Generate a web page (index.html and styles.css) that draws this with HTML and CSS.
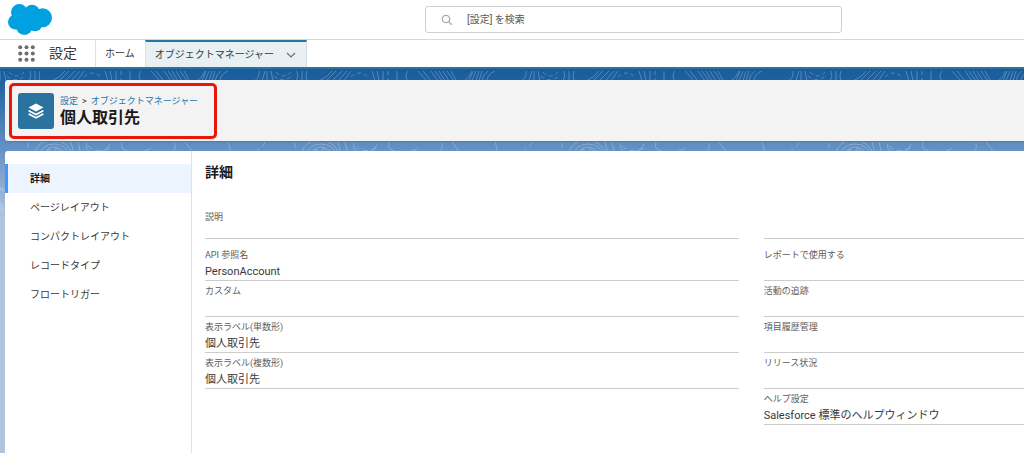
FILE: index.html
```html
<!DOCTYPE html>
<html lang="ja">
<head>
<meta charset="utf-8">
<title>個人取引先 | 設定</title>
<link rel="stylesheet" href="styles.css">
</head>
<body>
<header class="topbar">
  <svg class="logo" viewBox="0 0 44 31" role="img" aria-label="ロゴ">
    <g fill="#00a1e0"><circle cx="11.300" cy="8.300" r="8.300"/><circle cx="24" cy="8.600" r="7.800"/><circle cx="34.500" cy="13.700" r="9.500"/><circle cx="7.500" cy="18" r="7.500"/><circle cx="16.300" cy="22.800" r="8.200"/><circle cx="27" cy="20" r="7.300"/><path d="M6 8h27v14H8z"/></g>
  </svg>
  <div class="search">
    <svg class="search-icon" viewBox="0 0 12 12" aria-hidden="true"><circle cx="5" cy="5" r="3.700"/><path d="M7.800 7.800 10.800 10.800"/></svg>
    <input class="search-input" type="search" placeholder="[設定] を検索" aria-label="[設定] を検索">
  </div>
</header>
<nav class="appnav" aria-label="グローバル">
  <button class="launcher" aria-label="アプリケーションランチャー">
    <svg class="launcher-icon" viewBox="0 0 17 17"><g fill="#706e6b"><circle cx="2.200" cy="2.200" r="2"/><circle cx="8.500" cy="2.200" r="2"/><circle cx="14.800" cy="2.200" r="2"/><circle cx="2.200" cy="8.500" r="2"/><circle cx="8.500" cy="8.500" r="2"/><circle cx="14.800" cy="8.500" r="2"/><circle cx="2.200" cy="14.800" r="2"/><circle cx="8.500" cy="14.800" r="2"/><circle cx="14.800" cy="14.800" r="2"/></g></svg>
  </button>
  <span class="app-name">設定</span>
  <a class="tab" href="#">ホーム</a>
  <div class="tab tab-active">
    <a class="tab-link" href="#">オブジェクトマネージャー</a>
    <button class="tab-menu" aria-label="メニューを開く"><svg class="chevron" viewBox="0 0 10 6"><path d="M1 1l4 4 4-4"/></svg></button>
  </div>
</nav>
<div class="stage">
  <svg class="contours" aria-hidden="true">
    <defs>
      <pattern id="topo" x="151" y="0" width="267" height="400" patternUnits="userSpaceOnUse">
        <g fill="none" stroke="#fff" stroke-width="1">
          <path d="M0 2l9 10M5 2l8 10M13 2l7 10M17 2l7 10M21 2l6 10M25 2l6 10M29 2l7 10M33 2l5 9M46 12q6-4 8-10M51 12l4-10M54 12l4-10M58 12l3-10M61 12l3-10M64 12q1-7 6-10M69 11q1-6 8-9M103 12q6-3 5-10M111 12l3-10M116 12V2M120 2l2 10M145 12q3-4 1-10M151 12V2M156 12q-2-5 0-10M168 12q9-4 13-10M175 12l10-10M181 12l10-10M187 12l9-10M193 12l7-10M221 2l3 10M226 2l2 10M232 2v10M246 2v10M257 12q-4-5 0-10"/>
          <path stroke-dasharray="4 3" d="M125 3q7 8 15 0M200 8q8-8 17 0M237 2v10M123 7q9 8 19-1"/>
          <path d="M-7 74q6 14 16 12q18 0 15-12M34 73q12 20 34 18q16 1 9-18"/>
          <path d="M150 86q4-16 20-15q15 2 18 15M155 87q3-12 15-12t16 12M159 86q4-8 11-8t12 8M162 84l3-4 5 5 2-6 5 4M187 73l3 12M194 73l3 13M203 74q-3 9 8 9q12 1 15-8M238 73q-4 10 14 10t18-11"/>
          <path stroke-dasharray="5 4" d="M114 73q-3 7-8 8M144 74v10M204 77q8 8 22 2"/>
          <path d="M95 116q14-2 24 4M108 122q20-5 22 13M106 130q15 0 13 13M103 150q17-2 14-15"/>
        </g>
      </pattern>
    </defs>
    <rect width="100%" height="100%" fill="url(#topo)"/>
  </svg>
  <header class="page-header">
    <span class="object-icon"><svg class="layers" viewBox="0 0 18 18"><path fill="#fff" d="M9 1.500l7.500 4L9 9.500l-7.500-4z"/><path fill="none" stroke="#fff" stroke-width="1.700" stroke-linecap="round" d="M2.200 9 9 12.600 15.800 9M2.200 12.200 9 15.800l6.800-3.600"/></svg></span>
    <div class="titles">
      <div class="crumbs"><a href="#">設定</a><span>&gt;</span><a href="#">オブジェクトマネージャー</a></div>
      <h1 class="title">個人取引先</h1>
    </div>
    <div class="highlight"></div>
  </header>
  <main class="panel">
    <nav class="sidebar" aria-label="オブジェクト">
      <a class="side-link side-active" href="#" aria-current="page">詳細</a>
      <a class="side-link" href="#">ページレイアウト</a>
      <a class="side-link" href="#">コンパクトレイアウト</a>
      <a class="side-link" href="#">レコードタイプ</a>
      <a class="side-link" href="#">フロートリガー</a>
    </nav>
    <section class="details">
      <h2 class="section-title">詳細</h2>
      <div class="columns">
        <dl class="fields">
          <div class="field field-lead"><dt>説明</dt><dd></dd></div>
          <div class="field field-spaced"><dt>API 参照名</dt><dd>PersonAccount</dd></div>
          <div class="field"><dt>カスタム</dt><dd></dd></div>
          <div class="field"><dt>表示ラベル(単数形)</dt><dd>個人取引先</dd></div>
          <div class="field"><dt>表示ラベル(複数形)</dt><dd>個人取引先</dd></div>
        </dl>
        <dl class="fields">
          <div class="field field-lead"><dt></dt><dd></dd></div>
          <div class="field field-spaced"><dt>レポートで使用する</dt><dd></dd></div>
          <div class="field"><dt>活動の追跡</dt><dd></dd></div>
          <div class="field"><dt>項目履歴管理</dt><dd></dd></div>
          <div class="field"><dt>リリース状況</dt><dd></dd></div>
          <div class="field"><dt>ヘルプ設定</dt><dd>Salesforce 標準のヘルプウィンドウ</dd></div>
        </dl>
      </div>
    </section>
  </main>
</div>
</body>
</html>
```
FILE: styles.css
```css
* { box-sizing: border-box; }
body {
  margin: 0;
  min-height: 100vh;
  display: flex;
  flex-direction: column;
  font-family: Roboto, "Noto Sans CJK JP", sans-serif;
  font-size: 10px;
  color: #3a3836;
  background: #fff;
}
a { color: inherit; text-decoration: none; }
button { border: 0; padding: 0; background: none; display: flex; }
h1, h2, dl, dd { margin: 0; }

.topbar {
  display: grid;
  grid-template-columns: 425fr 417fr 182fr;
  align-items: center;
  height: 40px;
  border-bottom: 1px solid #d8d8d8;
}
.logo { width: 44px; height: 31px; margin-left: 8px; }
.search {
  display: flex;
  align-items: center;
  gap: 14px;
  height: 27px;
  padding: 0 15px;
  border: 1px solid #d0d0d0;
  border-radius: 3px;
}
.search-icon { width: 12px; height: 12px; fill: none; stroke: #aaa; stroke-width: 1.3; }
.search-input { flex: 1; min-width: 0; border: 0; padding: 0; outline: 0; background: none; font: inherit; }
.search-input::placeholder { color: #5a5856; opacity: 1; }

.appnav { display: flex; height: 27px; }
.launcher { align-items: center; padding-left: 18px; }
.launcher-icon { width: 17px; height: 17px; }
.app-name { padding: 0 18px 0 14px; font-size: 14px; line-height: 27px; }
.tab { padding: 0 10px 0 9px; border-left: 1px solid #e0e0e0; line-height: 28px; }
.tab-active {
  display: flex;
  align-items: center;
  gap: 12px;
  border-top: 2px solid #2a739e;
  border-right: 1px solid #d8dfe4;
  background: #e8f0f4;
  line-height: 24px;
}
.chevron { width: 10px; height: 6px; fill: none; stroke: #706e6b; stroke-width: 1.2; }

.stage {
  position: relative;
  flex: 1;
  display: flex;
  flex-direction: column;
  gap: 10px;
  padding: 11px 0 0 5px;
  border-top: 2px solid #2a739e;
  background: linear-gradient(#195c9e, #1d609f 10px, #6591c5 80px, #b0c4df 150px);
}
.contours { position: absolute; inset: 0; width: 100%; height: 100%; opacity: .25; }

.page-header {
  position: relative;
  display: flex;
  align-items: center;
  gap: 6px;
  height: 61px;
  padding-left: 13px;
  border-radius: 3px 0 0 3px;
  background: #f3f3f3;
  box-shadow: 0 1px 1px #6a7480;
}
.object-icon {
  display: flex;
  align-items: center;
  justify-content: center;
  width: 36px;
  height: 36px;
  border-radius: 3px;
  background: #2a739e;
}
.layers { width: 18px; height: 18px; }
.crumbs { display: flex; gap: 4px; font-size: 9px; line-height: 16px; }
.crumbs a { color: #2579ab; }
.title { padding-bottom: 1px; font-size: 16px; line-height: 18px; color: #1a1918; }
.highlight {
  position: absolute;
  inset: 3px auto 2px 4px;
  width: 208px;
  border: 3px solid #e8170c;
  border-radius: 5px;
}

.panel {
  position: relative;
  flex: 1;
  display: flex;
  border-radius: 3px 0 0 0;
  background: #fff;
}
.sidebar { width: 187px; padding-top: 13px; border-right: 1px solid #e2e2e2; }
.side-link { display: block; padding-left: 25px; line-height: 29px; }
.side-active {
  padding-left: 22px;
  border-left: 3px solid #3c97ff;
  background: #ebf4ff;
  color: #1a1918;
  font-weight: 700;
}
.details { flex: 1; padding: 11px 0 24px 13px; }
.section-title { font-size: 14px; line-height: 20px; color: #1a1918; }
.columns { display: grid; grid-template-columns: 205fr 100fr; gap: 25px; margin-top: 27px; }
.field { height: 36px; padding-top: 3px; border-bottom: 1px solid #ccc; }
.field-lead { height: 30px; padding-top: 1px; }
.field-spaced { height: 42px; padding-top: 9px; }
.field dt { font-size: 9px; line-height: 15px; color: #5e5c5a; }
.field dd { font-size: 11px; line-height: 17px; }
```
